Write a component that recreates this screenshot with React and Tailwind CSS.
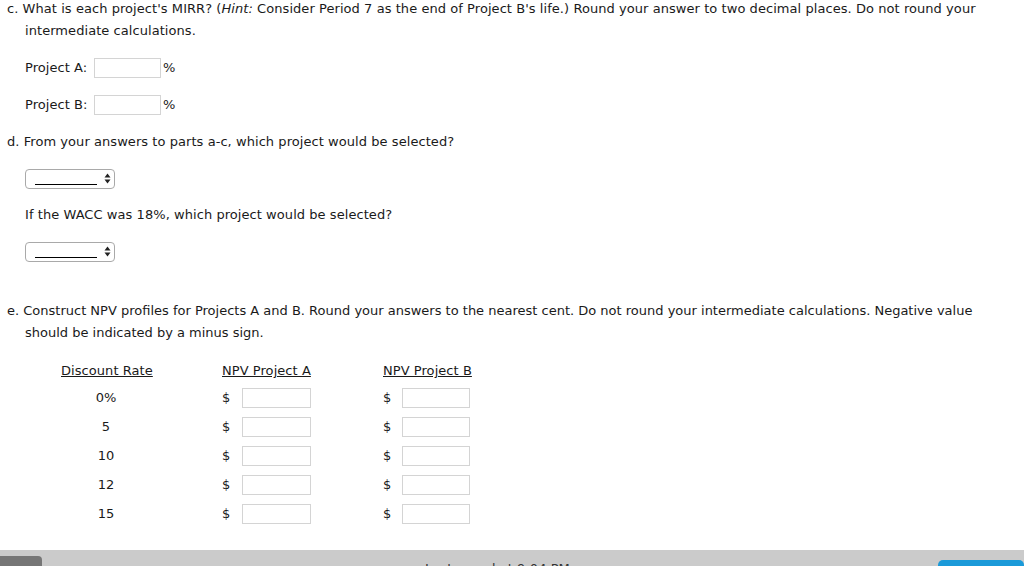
import React from "react";

const font = { fontFamily: '"DejaVu Sans", Verdana, sans-serif' };

function TextBox({ className = "" }) {
  return <div className={`h-[20px] border border-[#d4d4d4] bg-white ${className}`}></div>;
}

function Picker() {
  return (
    <div className="ml-[25px] w-[90px] h-[20px] rounded-[4px] border border-[#a9a9a9] bg-white flex items-end pl-[9px] pr-[3px] pb-[3px]">
      <div className="w-[62px] border-b border-black"></div>
      <svg className="ml-auto mb-[1px]" width="7" height="11" viewBox="0 0 7 11">
        <path d="M3.5 0.5 L6.5 4.5 L0.5 4.5 Z" fill="#222" />
        <path d="M3.5 10.5 L6.5 6.5 L0.5 6.5 Z" fill="#222" />
      </svg>
    </div>
  );
}

const rows = ["0%", "5", "10", "12", "15"];

export default function App() {
  return (
    <div className="w-[1024px] h-[566px] overflow-hidden bg-white text-[13px] tracking-[0.06px] text-[#1a1a1a] flex flex-col" style={font}>
      <div className="flex-1">
        <p className="pl-[7px] leading-[22px] -mt-[2px]">
          c. What is each project's MIRR? (<i>Hint:</i> Consider Period 7 as the end of Project B's life.) Round your answer to two decimal places. Do not round your
          <br />
          <span className="pl-[18px]">intermediate calculations.</span>
        </p>

        <div className="mt-[16px] pl-[25px] flex items-center h-[20px]">
          <span className="w-[69px]">Project A:</span>
          <TextBox className="w-[67px]" />
          <span className="ml-[2px]">%</span>
        </div>
        <div className="mt-[17px] pl-[25px] flex items-center h-[20px]">
          <span className="w-[69px]">Project B:</span>
          <TextBox className="w-[67px]" />
          <span className="ml-[2px]">%</span>
        </div>

        <p className="mt-[16px] pl-[7px] leading-[22px]">d. From your answers to parts a-c, which project would be selected?</p>
        <div className="mt-[16px]">
          <Picker />
        </div>
        <p className="mt-[15px] pl-[25px] leading-[22px]">If the WACC was 18%, which project would be selected?</p>
        <div className="mt-[16px]">
          <Picker />
        </div>

        <p className="mt-[38px] pl-[7px] leading-[22px] tracking-[0px]">
          e. Construct NPV profiles for Projects A and B. Round your answers to the nearest cent. Do not round your intermediate calculations. Negative value
          <br />
          <span className="pl-[18px]">should be indicated by a minus sign.</span>
        </p>

        <div className="mt-[17px] pl-[61px] flex flex-col">
          <div className="flex h-[20px] items-center">
            <span className="w-[161px] underline">Discount Rate</span>
            <span className="w-[161px] underline">NPV Project A</span>
            <span className="underline">NPV Project B</span>
          </div>
          <div className="mt-[7px] flex flex-col gap-[9px]">
            {rows.map((r) => (
              <div key={r} className="flex h-[20px] items-center">
                <span className="w-[90px] text-center">{r}</span>
                <span className="w-[71px]"></span>
                <span className="w-[20px]">$</span>
                <TextBox className="w-[69px]" />
                <span className="w-[72px]"></span>
                <span className="w-[19px]">$</span>
                <TextBox className="w-[68px]" />
              </div>
            ))}
          </div>
        </div>
      </div>

      <div className="h-[16px] bg-[#cbcbcb] relative shrink-0">
        <div className="absolute left-0 top-[6px] w-[42px] h-[12px] rounded-tr-[4px] bg-[#767676]"></div>
        <div className="absolute right-0 top-[10px] w-[86px] h-[8px] rounded-t-[5px] bg-[#1b9ad9]"></div>
        <div className="absolute left-[425px] top-[9px] text-[13px] text-[#333]">Last saved at 9:04 PM</div>
      </div>
    </div>
  );
}
